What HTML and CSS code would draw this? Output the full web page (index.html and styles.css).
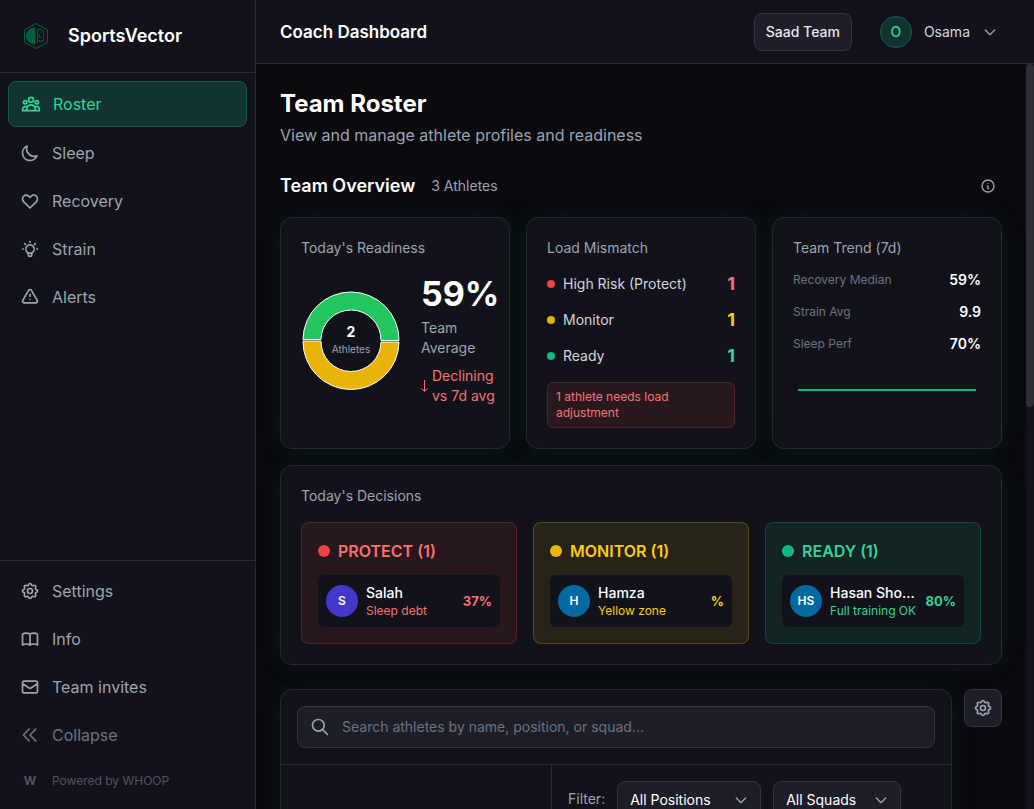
FILE: index.html
```html
<!DOCTYPE html>
<html lang="en">
<head>
    <meta charset="UTF-8">
    <meta name="viewport" content="width=device-width, initial-scale=1.0">
    <title>SportsVector - Coach Dashboard</title>
    <link rel="stylesheet" href="styles.css">
</head>
<body>
    <aside class="sidebar">
        <div class="brand">
            <svg class="brand-logo" viewBox="0 0 28 28" fill="none" stroke="#065f3c" stroke-width="1">
                <path d="M14 1.5l11.5 6.4v12.4L14 26.5 2.500 20.300V7.900z"/>
                <path d="M13 6v16c-5 0-8.500-3.500-8.500-8S8 6 13 6z" fill="#065f3c"/>
                <path d="M15.500 21V7.500h4l2 1.500v3.500l1 1.500-1.500 1 .5 4-2.500-.5V21M17.500 10h2M17.500 12.500v3h2M17.500 18v2"/>
            </svg>
            <span class="brand-name">SportsVector</span>
        </div>
        <nav class="nav-main">
            <a href="#" class="nav-item active">
                <svg class="icon" viewBox="0 0 24 24"><path d="M17 20h5v-2a3 3 0 00-5.356-1.857M17 20H7m10 0v-2c0-.656-.126-1.283-.356-1.857M7 20H2v-2a3 3 0 015.356-1.857M7 20v-2c0-.656.126-1.283.356-1.857m0 0a5.002 5.002 0 019.288 0M15 7a3 3 0 11-6 0 3 3 0 016 0zm6 3a2 2 0 11-4 0 2 2 0 014 0zM7 10a2 2 0 11-4 0 2 2 0 014 0z"/></svg>
                Roster
            </a>
            <a href="#" class="nav-item">
                <svg class="icon" viewBox="0 0 24 24"><path d="M20.354 15.354A9 9 0 018.646 3.646 9.003 9.003 0 0012 21a9.003 9.003 0 008.354-5.646z"/></svg>
                Sleep
            </a>
            <a href="#" class="nav-item">
                <svg class="icon" viewBox="0 0 24 24"><path d="M4.318 6.318a4.5 4.5 0 000 6.364L12 20.364l7.682-7.682a4.5 4.5 0 00-6.364-6.364L12 7.636l-1.318-1.318a4.5 4.5 0 00-6.364 0z"/></svg>
                Recovery
            </a>
            <a href="#" class="nav-item">
                <svg class="icon" viewBox="0 0 24 24"><path d="M9.663 17h4.673M12 3v1m6.364 1.636l-.707.707M21 12h-1M4 12H3m3.343-5.657l-.707-.707m2.828 9.9a5 5 0 117.072 0l-.548.547A3.374 3.374 0 0014 18.469V19a2 2 0 11-4 0v-.531c0-.895-.356-1.754-.988-2.386l-.548-.547z"/></svg>
                Strain
            </a>
            <a href="#" class="nav-item">
                <svg class="icon" viewBox="0 0 24 24"><path d="M12 9v2m0 4h.01m-6.938 4h13.856c1.54 0 2.502-1.667 1.732-3L13.732 4c-.77-1.333-2.694-1.333-3.464 0L3.34 16c-.77 1.333.192 3 1.732 3z"/></svg>
                Alerts
            </a>
        </nav>
        <div class="nav-bottom">
            <a href="#" class="nav-item">
                <svg class="icon" viewBox="0 0 24 24"><path d="M10.325 4.317c.426-1.756 2.924-1.756 3.35 0a1.724 1.724 0 002.573 1.066c1.543-.94 3.31.826 2.37 2.37a1.724 1.724 0 001.065 2.572c1.756.426 1.756 2.924 0 3.35a1.724 1.724 0 00-1.066 2.573c.94 1.543-.826 3.31-2.37 2.37a1.724 1.724 0 00-2.572 1.065c-.426 1.756-2.924 1.756-3.35 0a1.724 1.724 0 00-2.573-1.066c-1.543.94-3.31-.826-2.37-2.37a1.724 1.724 0 00-1.065-2.572c-1.756-.426-1.756-2.924 0-3.35a1.724 1.724 0 001.066-2.573c-.94-1.543.826-3.31 2.37-2.37.996.608 2.296.07 2.572-1.065z"/><path d="M15 12a3 3 0 11-6 0 3 3 0 016 0z"/></svg>
                Settings
            </a>
            <a href="#" class="nav-item">
                <svg class="icon" viewBox="0 0 24 24"><path d="M12 6.253v13m0-13C10.832 5.477 9.246 5 7.5 5S4.168 5.477 3 6.253v13C4.168 18.477 5.754 18 7.5 18s3.332.477 4.5 1.253m0-13C13.168 5.477 14.754 5 16.5 5c1.747 0 3.332.477 4.5 1.253v13C19.832 18.477 18.247 18 16.5 18c-1.746 0-3.332.477-4.5 1.253"/></svg>
                Info
            </a>
            <a href="#" class="nav-item">
                <svg class="icon" viewBox="0 0 24 24"><path d="M3 8l7.89 5.26a2 2 0 002.22 0L21 8M5 19h14a2 2 0 002-2V7a2 2 0 00-2-2H5a2 2 0 00-2 2v10a2 2 0 002 2z"/></svg>
                Team invites
            </a>
            <button class="nav-item collapse">
                <svg class="icon" viewBox="0 0 24 24"><path d="M11 19l-7-7 7-7m8 14l-7-7 7-7"/></svg>
                Collapse
            </button>
            <div class="powered"><b>W</b><span>Powered by WHOOP</span></div>
        </div>
    </aside>

    <div class="page">
        <header class="topbar">
            <h2>Coach Dashboard</h2>
            <div class="topbar-right">
                <button class="team-btn">Saad Team</button>
                <button class="user-btn">
                    <span class="user-avatar">O</span>
                    <span>Osama</span>
                    <svg class="icon icon-sm" viewBox="0 0 24 24"><path d="M19 9l-7 7-7-7"/></svg>
                </button>
            </div>
        </header>

        <div class="scroll-area">
            <main>
                <h1>Team Roster</h1>
                <p class="subtitle">View and manage athlete profiles and readiness</p>

                <div class="overview-head">
                    <h2>Team Overview</h2>
                    <span>3 Athletes</span>
                    <button class="info-btn" aria-label="About this overview">
                        <svg class="icon icon-sm" viewBox="0 0 24 24"><path d="M13 16h-1v-4h-1m1-4h.01M21 12a9 9 0 11-18 0 9 9 0 0118 0z"/></svg>
                    </button>
                </div>

                <section class="cards">
                    <div class="card">
                        <h3>Today's Readiness</h3>
                        <div class="readiness">
                            <div class="donut">
                                <svg viewBox="0 0 100 100" stroke="#fff" stroke-width="1">
                                    <path d="M2 49.500A48 48 0 0 1 98 50.500H80A30 30 0 0 0 20 49.500z" fill="#22c55e"/>
                                    <path d="M98 52A48 48 0 0 1 2 51H20A30 30 0 0 0 80 52z" fill="#eab308"/>
                                </svg>
                                <div class="donut-label"><b>2</b><span>Athletes</span></div>
                            </div>
                            <div class="average">
                                <strong>59%</strong>
                                <p>Team Average</p>
                                <div class="trend">
                                    <svg viewBox="0 0 7 12"><path d="M3.500 0v11M.5 8.500l3 3 3-3"/></svg>
                                    <span>Declining vs 7d avg</span>
                                </div>
                            </div>
                        </div>
                    </div>

                    <div class="card">
                        <h3>Load Mismatch</h3>
                        <ul class="load-list">
                            <li class="red"><i class="dot"></i><span>High Risk (Protect)</span><b>1</b></li>
                            <li class="yellow"><i class="dot"></i><span>Monitor</span><b>1</b></li>
                            <li class="green"><i class="dot"></i><span>Ready</span><b>1</b></li>
                        </ul>
                        <p class="load-alert">1 athlete needs load adjustment</p>
                    </div>

                    <div class="card">
                        <h3>Team Trend (7d)</h3>
                        <dl class="trend-list">
                            <div><dt>Recovery Median</dt><dd>59%</dd></div>
                            <div><dt>Strain Avg</dt><dd>9.9</dd></div>
                            <div><dt>Sleep Perf</dt><dd>70%</dd></div>
                        </dl>
                        <svg class="sparkline" viewBox="0 0 188 48" preserveAspectRatio="none"><path d="M5 24H183"/></svg>
                    </div>
                </section>

                <section class="card decisions">
                    <h3>Today's Decisions</h3>
                    <div class="decision-grid">
                        <div class="decision red">
                            <h4><i class="dot"></i>PROTECT (1)</h4>
                            <div class="athlete">
                                <span class="avatar indigo">S</span>
                                <div class="athlete-info"><p>Salah</p><small>Sleep debt</small></div>
                                <b>37%</b>
                            </div>
                        </div>
                        <div class="decision yellow">
                            <h4><i class="dot"></i>MONITOR (1)</h4>
                            <div class="athlete">
                                <span class="avatar">H</span>
                                <div class="athlete-info"><p>Hamza</p><small>Yellow zone</small></div>
                                <b>%</b>
                            </div>
                        </div>
                        <div class="decision green">
                            <h4><i class="dot"></i>READY (1)</h4>
                            <div class="athlete">
                                <span class="avatar">HS</span>
                                <div class="athlete-info"><p>Hasan Sho...</p><small>Full training OK</small></div>
                                <b>80%</b>
                            </div>
                        </div>
                    </div>
                </section>

                <section class="roster-row">
                    <div class="roster-panel">
                        <div class="search-area">
                            <label class="search">
                                <svg class="icon" viewBox="0 0 24 24"><path d="M21 21l-6-6m2-5a7 7 0 11-14 0 7 7 0 0114 0z"/></svg>
                                <input type="text" aria-label="Search athletes" placeholder="Search athletes by name, position, or squad...">
                            </label>
                        </div>
                        <div class="roster-body">
                            <div class="roster-list"></div>
                            <div class="filters">
                                <label for="position">Filter:</label>
                                <div class="select">
                                    <select id="position"><option>All Positions</option></select>
                                    <svg class="icon icon-sm" viewBox="0 0 24 24"><path d="M19 9l-7 7-7-7"/></svg>
                                </div>
                                <div class="select select-squad">
                                    <select aria-label="Squad"><option>All Squads</option></select>
                                    <svg class="icon icon-sm" viewBox="0 0 24 24"><path d="M19 9l-7 7-7-7"/></svg>
                                </div>
                            </div>
                        </div>
                    </div>
                    <button class="gear-btn" aria-label="Roster settings">
                        <svg class="icon" viewBox="0 0 24 24"><path d="M10.325 4.317c.426-1.756 2.924-1.756 3.35 0a1.724 1.724 0 002.573 1.066c1.543-.94 3.31.826 2.37 2.37a1.724 1.724 0 001.065 2.572c1.756.426 1.756 2.924 0 3.35a1.724 1.724 0 00-1.066 2.573c.94 1.543-.826 3.31-2.37 2.37a1.724 1.724 0 00-2.572 1.065c-.426 1.756-2.924 1.756-3.35 0a1.724 1.724 0 00-2.573-1.066c-1.543.94-3.31-.826-2.37-2.37a1.724 1.724 0 00-1.065-2.572c-1.756-.426-1.756-2.924 0-3.35a1.724 1.724 0 001.066-2.573c-.94-1.543.826-3.31 2.37-2.37.996.608 2.296.07 2.572-1.065z"/><path d="M15 12a3 3 0 11-6 0 3 3 0 016 0z"/></svg>
                    </button>
                </section>
            </main>
            <div class="scrollbar"><div class="thumb"></div></div>
        </div>
    </div>
</body>
</html>
```
FILE: styles.css
```css
* {
    box-sizing: border-box;
    margin: 0;
    padding: 0;
}

body {
    display: flex;
    height: 100vh;
    overflow: hidden;
    background-color: #0a0a0f;
    color: #fff;
    font-family: Inter, "Liberation Sans", sans-serif;
    font-size: 14px;
    line-height: 20px;
}

button, input, select {
    font: inherit;
    color: inherit;
}

button {
    background: none;
    border: none;
    cursor: pointer;
}

.icon {
    width: 20px;
    height: 20px;
    flex-shrink: 0;
    fill: none;
    stroke: #9ca3af;
    stroke-width: 2;
    stroke-linecap: round;
    stroke-linejoin: round;
}

.icon-sm {
    width: 16px;
    height: 16px;
}

/* sidebar */
.sidebar {
    width: 256px;
    flex-shrink: 0;
    display: flex;
    flex-direction: column;
    background-color: #12131a;
    border-right: 1px solid #2a2b31;
}

.brand {
    display: flex;
    align-items: center;
    gap: 18px;
    height: 73px;
    padding: 0 22px;
    border-bottom: 1px solid #2a2b31;
}

.brand-logo {
    width: 28px;
    height: 28px;
}

.brand-name {
    font-size: 18px;
    font-weight: 600;
    line-height: 28px;
}

.nav-main, .nav-bottom {
    display: flex;
    flex-direction: column;
    gap: 4px;
    padding: 8px;
}

.nav-main {
    flex: 1;
}

.nav-bottom {
    border-top: 1px solid #2a2b31;
}

.nav-item {
    display: flex;
    align-items: center;
    gap: 12px;
    padding: 10px 12px;
    border-radius: 8px;
    color: #9ca3af;
    font-size: 16px;
    line-height: 24px;
    text-decoration: none;
}

.nav-item.active {
    background-color: #12332f;
    border: 1px solid #10614b;
    color: #34d399;
}

.nav-item.active .icon {
    stroke: #34d399;
}

.nav-item.collapse {
    color: #6b7280;
}

.nav-item.collapse .icon {
    stroke: #6b7280;
}

.powered {
    display: flex;
    gap: 12px;
    padding: 10px 12px;
    color: #4b5563;
    font-size: 12px;
}

.powered b {
    width: 20px;
    text-align: center;
}

/* top bar */
.page {
    flex: 1;
    min-width: 0;
    display: flex;
    flex-direction: column;
}

.topbar {
    display: flex;
    align-items: center;
    justify-content: space-between;
    height: 64px;
    flex-shrink: 0;
    padding: 0 24px;
    background-color: #12131a;
    border-bottom: 1px solid #2a2b31;
}

.topbar h2 {
    font-size: 17px;
    font-weight: 600;
    line-height: 28px;
}

.topbar-right {
    display: flex;
    align-items: center;
    gap: 16px;
}

.team-btn {
    height: 38px;
    padding: 0 11px;
    background-color: #1e1e29;
    border: 1px solid #34353f;
    border-radius: 8px;
    color: #e5e7eb;
    font-weight: 500;
}

.user-btn {
    display: flex;
    align-items: center;
    gap: 12px;
    padding: 0 12px;
    color: #d1d5db;
}

.user-avatar {
    width: 32px;
    height: 32px;
    border: 1px solid #10614b;
    border-radius: 50%;
    background-color: #12332f;
    color: #34d399;
    font-weight: 500;
    line-height: 30px;
}

/* content */
.scroll-area {
    flex: 1;
    min-height: 0;
    display: flex;
}

main {
    flex: 1;
    min-width: 0;
    overflow-y: auto;
    padding: 24px;
    scrollbar-width: none;
}

.scrollbar {
    width: 8px;
    background-color: #12131a;
}

.thumb {
    height: 46%;
    border-radius: 4px;
    background-color: #2d2d39;
}

h1 {
    font-size: 24px;
    line-height: 32px;
}

.subtitle {
    margin-top: 3px;
    color: #9ca3af;
    font-size: 16px;
    line-height: 24px;
}

.overview-head {
    display: flex;
    align-items: center;
    gap: 16px;
    height: 30px;
    margin: 24px 0 16px;
    color: #9ca3af;
}

.overview-head h2 {
    color: #fff;
    font-size: 18px;
    font-weight: 600;
    line-height: 28px;
}

.info-btn {
    display: flex;
    margin-left: auto;
    padding: 6px;
}

.cards {
    display: grid;
    grid-template-columns: repeat(3, minmax(0, 1fr));
    gap: 16px;
}

.card, .roster-panel {
    background-color: #12131a;
    border: 1px solid #25282c;
    border-radius: 12px;
    box-shadow: 0 0 30px rgba(16, 185, 129, 0.08);
}

.card {
    padding: 20px;
}

.card h3 {
    margin-bottom: 12px;
    color: #9ca3af;
    font-size: 14px;
    font-weight: 400;
}

.red {
    --strong: #ef4444;
    --text: #f87171;
    --tint: rgba(239, 68, 68, 0.1);
    --line: rgba(239, 68, 68, 0.25);
}

.yellow {
    --strong: #eab308;
    --text: #facc15;
    --tint: rgba(234, 179, 8, 0.1);
    --line: rgba(234, 179, 8, 0.25);
}

.green {
    --strong: #10b981;
    --text: #34d399;
    --tint: rgba(16, 185, 129, 0.1);
    --line: rgba(16, 185, 129, 0.25);
}

.dot {
    width: 8px;
    height: 8px;
    border-radius: 50%;
    background-color: var(--strong);
}

.readiness {
    display: flex;
    align-items: center;
    gap: 20px;
    height: 140px;
}

.donut {
    position: relative;
    width: 100px;
    height: 100px;
    flex-shrink: 0;
}

.donut-label {
    position: absolute;
    inset: 0;
    display: flex;
    flex-direction: column;
    align-items: center;
    justify-content: center;
    color: #9ca3af;
    font-size: 10px;
    line-height: 16px;
}

.donut-label b {
    color: #fff;
    font-size: 14px;
    line-height: 18px;
}

.average {
    width: min-content;
    flex-shrink: 0;
    color: #9ca3af;
}

.average strong {
    display: block;
    margin-bottom: 4px;
    color: #fff;
    font-size: 34px;
    line-height: 40px;
}

.trend {
    display: flex;
    align-items: center;
    gap: 4px;
    margin-top: 8px;
    color: #f87171;
}

.trend svg {
    width: 7px;
    height: 12px;
    flex-shrink: 0;
    fill: none;
    stroke: #f87171;
}

.load-list {
    display: flex;
    flex-direction: column;
    gap: 8px;
    list-style: none;
}

.load-list li {
    display: flex;
    align-items: center;
    gap: 8px;
    color: #d1d5db;
    white-space: nowrap;
}

.load-list b {
    margin-left: auto;
    color: var(--text);
    font-size: 18px;
    line-height: 28px;
}

.load-alert {
    margin-top: 12px;
    padding: 6px 8px;
    background-color: #2a181f;
    border: 1px solid #55202a;
    border-radius: 6px;
    color: #f87171;
    font-size: 12px;
    line-height: 16px;
}

.trend-list {
    display: flex;
    flex-direction: column;
    gap: 12px;
}

.trend-list div {
    display: flex;
    justify-content: space-between;
}

.trend-list dt {
    color: #6b7280;
    font-size: 12px;
}

.trend-list dd {
    font-weight: 600;
}

.sparkline {
    display: block;
    width: 100%;
    height: 48px;
    margin-top: 12px;
    fill: none;
    stroke: #10b981;
    stroke-width: 2;
}

/* decisions */
.decisions {
    margin-top: 16px;
}

.decisions h3 {
    margin-bottom: 16px;
}

.decision-grid {
    display: grid;
    grid-template-columns: repeat(3, minmax(0, 1fr));
    gap: 16px;
}

.decision {
    padding: 16px;
    background-color: var(--tint);
    border: 1px solid var(--line);
    border-radius: 8px;
    color: var(--text);
}

.decision h4 {
    display: flex;
    align-items: center;
    gap: 8px;
    margin-bottom: 12px;
    font-size: 16px;
    font-weight: 600;
    line-height: 24px;
}

.decision .dot {
    width: 12px;
    height: 12px;
}

.athlete {
    display: flex;
    align-items: center;
    gap: 8px;
    padding: 8px;
    background-color: #12131a;
    border-radius: 6px;
}

.avatar {
    width: 32px;
    height: 32px;
    flex-shrink: 0;
    border-radius: 50%;
    background-color: #0369a1;
    color: #fff;
    font-size: 12px;
    font-weight: 600;
    line-height: 32px;
    text-align: center;
}

.avatar.indigo {
    background-color: #4338ca;
}

.athlete-info {
    flex: 1;
    min-width: 0;
    white-space: nowrap;
}

.athlete-info p {
    color: #fff;
    font-weight: 500;
}

.athlete-info small {
    display: block;
    font-size: 12px;
    line-height: 16px;
}

.athlete b {
    font-size: 13px;
}

/* roster */
.roster-row {
    display: flex;
    align-items: flex-start;
    gap: 12px;
    margin-top: 24px;
}

.roster-panel {
    flex: 1;
    min-width: 0;
}

.search-area {
    padding: 16px;
    border-bottom: 1px solid #2a2b31;
}

.search {
    display: flex;
    align-items: center;
    gap: 12px;
    height: 42px;
    padding: 0 12px;
    background-color: #1e1e29;
    border: 1px solid #34353f;
    border-radius: 8px;
}

.search input {
    flex: 1;
    background: none;
    border: none;
    outline: none;
}

.search input::placeholder {
    color: #6b7280;
}

.roster-body {
    display: grid;
    grid-template-columns: 270px 1fr;
    min-height: 816px;
}

.filters {
    display: flex;
    align-items: flex-start;
    gap: 12px;
    padding: 16px;
    border-left: 1px solid #2a2b31;
    color: #9ca3af;
    line-height: 36px;
}

.select {
    position: relative;
    width: 144px;
}

.select-squad {
    width: 128px;
}

.select select {
    appearance: none;
    width: 100%;
    height: 36px;
    padding: 0 12px;
    background-color: #1e1e29;
    border: 1px solid #34353f;
    border-radius: 8px;
    color: #fff;
}

.select .icon {
    position: absolute;
    top: 11px;
    right: 12px;
    pointer-events: none;
}

.gear-btn {
    display: flex;
    padding: 8px;
    background-color: #1e1e29;
    border: 1px solid #34353f;
    border-radius: 8px;
}
```
